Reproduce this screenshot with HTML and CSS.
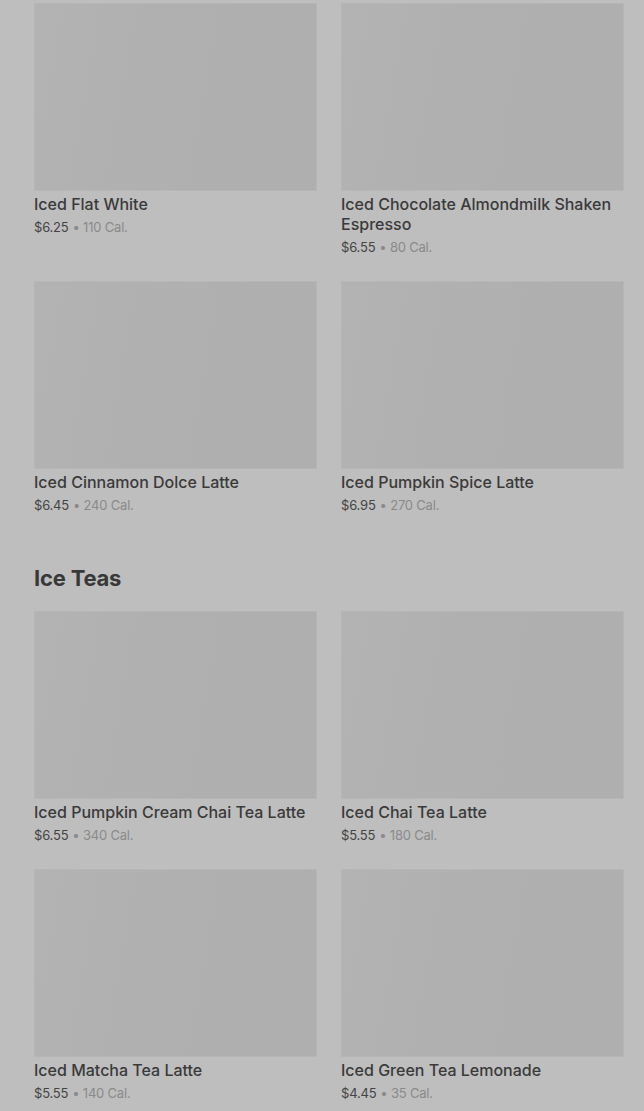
FILE: index.html
```html
<!DOCTYPE html>
<html>
<head>
    <title>Menu</title>
    <link rel="stylesheet" href="styles.css">
</head>
<body>
    <div class="menu">
        <section class="category">
            <div class="grid">
                <div class="item">
                    <div class="thumb"></div>
                    <div class="name">Iced Flat White</div>
                    <div class="meta">$6.25<span class="cal">&bull; 110 Cal.</span></div>
                </div>
                <div class="item">
                    <div class="thumb"></div>
                    <div class="name">Iced Chocolate Almondmilk Shaken Espresso</div>
                    <div class="meta">$6.55<span class="cal">&bull; 80 Cal.</span></div>
                </div>
                <div class="item">
                    <div class="thumb"></div>
                    <div class="name">Iced Cinnamon Dolce Latte</div>
                    <div class="meta">$6.45<span class="cal">&bull; 240 Cal.</span></div>
                </div>
                <div class="item">
                    <div class="thumb"></div>
                    <div class="name">Iced Pumpkin Spice Latte</div>
                    <div class="meta">$6.95<span class="cal">&bull; 270 Cal.</span></div>
                </div>
            </div>
        </section>

        <section class="category">
            <h2>Ice Teas</h2>
            <div class="grid">
                <div class="item">
                    <div class="thumb"></div>
                    <div class="name">Iced Pumpkin Cream Chai Tea Latte</div>
                    <div class="meta">$6.55<span class="cal">&bull; 340 Cal.</span></div>
                </div>
                <div class="item">
                    <div class="thumb"></div>
                    <div class="name">Iced Chai Tea Latte</div>
                    <div class="meta">$5.55<span class="cal">&bull; 180 Cal.</span></div>
                </div>
                <div class="item">
                    <div class="thumb"></div>
                    <div class="name">Iced Matcha Tea Latte</div>
                    <div class="meta">$5.55<span class="cal">&bull; 140 Cal.</span></div>
                </div>
                <div class="item">
                    <div class="thumb"></div>
                    <div class="name">Iced Green Tea Lemonade</div>
                    <div class="meta">$4.45<span class="cal">&bull; 35 Cal.</span></div>
                </div>
            </div>
        </section>
    </div>
</body>
</html>
```

FILE: styles.css
```css
body {
    margin: 0;
    font-family: Inter, "Noto Sans", sans-serif;
    background-color: #bebebe;
    color: #383838;
}

.menu {
    padding: 3px 20px 0 34px;
}

.category h2 {
    margin: 0;
    padding: 50px 0 19px;
    font-size: 22px;
    line-height: 28px;
    font-weight: 700;
    letter-spacing: -0.2px;
    color: #383838;
}

.grid {
    display: grid;
    grid-template-columns: 1fr 1fr;
    column-gap: 24px;
    row-gap: 25px;
}

.thumb {
    height: 188px;
    background: linear-gradient(100deg, #b3b3b3 0%, #b0b0b0 40%, #afafaf 100%);
    box-shadow: inset 0 0 0 1px #b6b6b6;
}

.name {
    margin-top: 3px;
    font-size: 16px;
    line-height: 20px;
    font-weight: 500;
    color: #3a3a3a;
}

.meta {
    margin-top: 4px;
    font-size: 13px;
    line-height: 18px;
    letter-spacing: -0.2px;
    color: #444;
}

.cal {
    margin-left: 4px;
    color: #8a8a8a;
}
```
